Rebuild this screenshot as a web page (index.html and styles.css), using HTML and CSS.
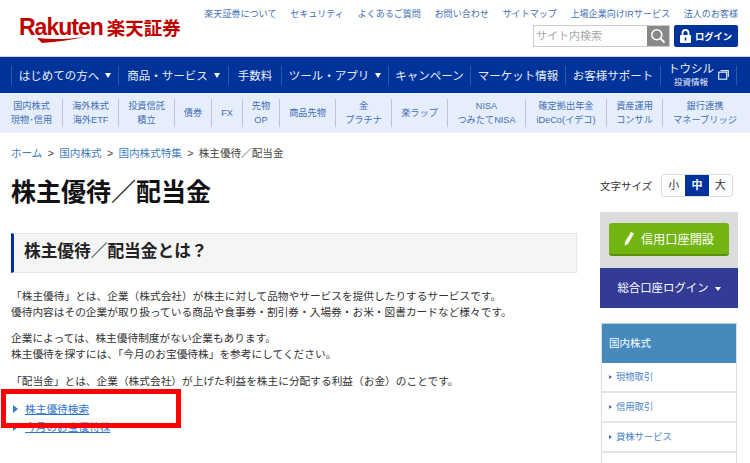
FILE: index.html
```
<!DOCTYPE html>
<html lang="ja">
<head>
<meta charset="utf-8">
<title>株主優待／配当金</title>
<link rel="stylesheet" href="styles.css">
</head>
<body>
<header class="head">
  <div class="logo">
    <span class="logo-r">Rakuten<svg class="swoosh" viewBox="0 0 48 6" aria-hidden="true"><path d="M0 1 C16 3 34 2 48 0 C34 3 20 5 5 6 Z" fill="#bf0000"/></svg></span><span class="logo-j">楽天証券</span>
  </div>
  <div class="head-right">
    <nav class="util">
      <a>楽天証券について</a><a>セキュリティ</a><a>よくあるご質問</a><a>お問い合わせ</a><a>サイトマップ</a><a>上場企業向けIRサービス</a><a>法人のお客様</a>
    </nav>
    <div class="tools">
      <div class="search"><span class="search-text">サイト内検索</span><span class="search-btn"><svg width="16" height="16" viewBox="0 0 16 16" aria-hidden="true"><circle cx="6.8" cy="6.8" r="5" fill="none" stroke="#fff" stroke-width="1.5"/><path d="M10.5 10.5 L14.5 14.5" stroke="#fff" stroke-width="1.8"/></svg></span></div>
      <div class="login"><svg width="11" height="14" viewBox="0 0 11 14" aria-hidden="true"><path d="M2.5 6 V4 a3 3 0 0 1 6 0 V6" fill="none" stroke="#fff" stroke-width="1.8"/><rect x="0" y="6" width="11" height="8" rx="1" fill="#fff"/><rect x="4.7" y="8.5" width="1.6" height="3" fill="#039"/></svg><span>ログイン</span></div>
    </div>
  </div>
</header>
<nav class="gnav">
  <a class="g1">はじめての方へ<i class="tri"></i></a>
  <a class="g2">商品・サービス<i class="tri"></i></a>
  <a class="g3">手数料</a>
  <a class="g4">ツール・アプリ<i class="tri"></i></a>
  <a class="g5">キャンペーン</a>
  <a class="g6">マーケット情報</a>
  <a class="g7">お客様サポート</a>
  <a class="g8"><span class="tousiru"><span>トウシル</span><small>投資情報</small></span><svg width="11" height="10" viewBox="0 0 11 10" aria-hidden="true"><rect x="0.7" y="2.2" width="8" height="7" fill="none" stroke="#dfe6f5" stroke-width="1.2"/><path d="M2.5 0.7 H10.3 V7" fill="none" stroke="#dfe6f5" stroke-width="1.2"/></svg></a>
</nav>
<nav class="snav">
  <a class="s1">国内株式<br>現物･信用</a>
  <a class="s2">海外株式<br>海外ETF</a>
  <a class="s3">投資信託<br>積立</a>
  <a class="s4">債券</a>
  <a class="s5">FX</a>
  <a class="s6">先物<br>OP</a>
  <a class="s7">商品先物</a>
  <a class="s8">金<br>プラチナ</a>
  <a class="s9">楽ラップ</a>
  <a class="s10">NISA<br>つみたてNISA</a>
  <a class="s11">確定拠出年金<br>iDeCo(イデコ)</a>
  <a class="s12">資産運用<br>コンサル</a>
  <a class="s13">銀行連携<br>マネーブリッジ</a>
</nav>
<div class="page">
  <main class="main">
    <p class="crumb"><a>ホーム</a><span>&gt;</span><a>国内株式</a><span>&gt;</span><a>国内株式特集</a><span>&gt;</span><span>株主優待／配当金</span></p>
    <h1>株主優待／配当金</h1>
    <h2>株主優待／配当金とは？</h2>
    <p class="para">「株主優待」とは、企業（株式会社）が株主に対して品物やサービスを提供したりするサービスです。<br>優待内容はその企業が取り扱っている商品や食事券・割引券・入場券・お米・図書カードなど様々です。</p>
    <p class="para">企業によっては、株主優待制度がない企業もあります。<br>株主優待を探すには、「今月のお宝優待株」を参考にしてください。</p>
    <p class="para para-last">「配当金」とは、企業（株式会社）が上げた利益を株主に分配する利益（お金）のことです。</p>
    <ul class="links">
      <li><a>株主優待検索</a></li>
      <li><a>今月のお宝優待株</a></li>
    </ul>
    <div class="highlight"></div>
  </main>
  <aside class="side">
    <div class="fontsize"><span class="fs-label">文字サイズ</span><div class="fs-box"><span>小</span><span class="on">中</span><span>大</span></div></div>
    <div class="open-wrap"><a class="open"><svg width="11" height="15" viewBox="0 0 11 15" aria-hidden="true"><path d="M7 1 L10 2.6 L4 13 L0.8 14.6 L1 11 Z" fill="#fff"/></svg>信用口座開設</a></div>
    <div class="acct">総合口座ログイン<i class="tri tri-s"></i></div>
    <div class="menu">
      <div class="menu-h">国内株式</div>
      <a>現物取引</a>
      <a>信用取引</a>
      <a>貸株サービス</a>
      <a></a>
    </div>
  </aside>
</div>
</body>
</html>
```
FILE: styles.css
```
html, body { margin: 0; padding: 0; }
body {
  width: 750px;
  height: 463px;
  overflow: hidden;
  background: #fff;
  color: #333;
  font-family: "Liberation Sans", "Noto Sans CJK JP", sans-serif;
  font-size: 12px;
}
a { color: inherit; text-decoration: none; }
.head {
  display: flex;
  justify-content: space-between;
  height: 56px;
  box-sizing: border-box;
}
.logo {
  display: flex;
  align-items: baseline;
  padding: 13px 0 0 19px;
  color: #bf0000;
  white-space: nowrap;
  flex: none;
}
.logo-r {
  position: relative;
  font-size: 23px;
  line-height: 28px;
  font-weight: 700;
  letter-spacing: -1px;
  font-family: "Liberation Sans", sans-serif;
}
.swoosh {
  position: absolute;
  left: 18px;
  top: 24px;
  width: 48px;
  height: 6px;
}
.logo-j {
  margin-left: 4px;
  font-size: 18.5px;
  font-weight: 700;
}
.head-right {
  display: flex;
  flex-direction: column;
  align-items: flex-end;
  padding-right: 12px;
}
.util {
  display: flex;
  gap: 13.7px;
  padding-top: 8px;
  height: 17px;
  font-size: 9.05px;
  line-height: 13px;
  color: #3f6fb5;
  white-space: nowrap;
}
.tools { display: flex; gap: 4px; }
.search {
  display: flex;
  width: 137px;
  height: 22px;
  box-sizing: border-box;
  border: 1px solid #ccc;
  background: #fff;
}
.search-text {
  flex: 1;
  padding-left: 2px;
  font-size: 11px;
  line-height: 20px;
  color: #aaa;
}
.search-btn {
  display: flex;
  align-items: center;
  justify-content: center;
  width: 22px;
  background: #888;
}
.login {
  display: flex;
  align-items: center;
  justify-content: center;
  gap: 4px;
  width: 64px;
  height: 22px;
  box-sizing: border-box;
  border-radius: 2px;
  background: #039;
  color: #fff;
  font-size: 9.3px;
  font-weight: 700;
}
.gnav {
  display: flex;
  align-items: center;
  height: 37px;
  box-sizing: border-box;
  border-top: 1px solid #c9d4ea;
  padding-left: 11px;
  background: #039;
  color: #e8eefa;
  font-size: 11.5px;
  white-space: nowrap;
}
.gnav a {
  display: flex;
  align-items: center;
  justify-content: center;
  flex: none;
  height: 19px;
  box-sizing: border-box;
  border-left: 1px solid #2f58a8;
}
.g1 { width: 107px; }
.g2 { width: 110px; }
.g3 { width: 53px; }
.g4 { width: 107px; }
.g5 { width: 82px; }
.g6 { width: 95px; }
.g7 { width: 95px; }
.g8 { width: 77px; gap: 4px; border-right: 1px solid #2f58a8; }
.tri {
  display: inline-block;
  width: 0;
  height: 0;
  margin-left: 6px;
  border-style: solid;
  border-width: 5px 3.5px 0;
  border-color: #fff transparent transparent;
}
.tousiru {
  display: flex;
  flex-direction: column;
  align-items: center;
  line-height: 14px;
}
.tousiru small { font-size: 8.5px; line-height: 12px; }
.snav {
  display: flex;
  align-items: center;
  height: 40px;
  background: #e6eefb;
  padding-left: 1px;
  color: #3f6fb5;
  font-size: 9.2px;
  line-height: 14px;
  text-align: center;
  white-space: nowrap;
  border-bottom: 1px solid #eef2fa;
  box-sizing: border-box;
}
.snav a {
  display: flex;
  align-items: center;
  justify-content: center;
  flex: none;
  height: 28px;
  box-sizing: border-box;
  border-right: 1px solid #bfc5cf;
}
.snav a:last-child { border-right: 0; }
.s1 { width: 62px; } .s2 { width: 56px; } .s3 { width: 56px; } .s4 { width: 37px; }
.s5 { width: 31px; } .s6 { width: 37px; } .s7 { width: 56px; } .s8 { width: 56px; }
.s9 { width: 56px; } .s10 { width: 78px; } .s11 { width: 81px; } .s12 { width: 56px; }
.s13 { width: 84px; }
.page {
  display: flex;
  padding: 0 0 0 11px;
}
.main {
  position: relative;
  width: 566px;
  flex: none;
}
.crumb {
  display: flex;
  gap: 5.3px;
  margin: 13px 0 0;
  font-size: 10.6px;
  line-height: 15px;
  color: #444;
}
.crumb a { color: #3f7cc0; }
h1 {
  margin: 14px 0 0;
  font-size: 25px;
  line-height: 34px;
  font-weight: 700;
  color: #111;
}
h2 {
  margin: 24px 0 0;
  height: 40px;
  box-sizing: border-box;
  padding-left: 10px;
  border-left: 3px solid #039;
  border-top: 1px solid #e6e6e6;
  border-bottom: 1px solid #e6e6e6;
  border-right: 1px solid #e6e6e6;
  background: #f5f5f5;
  font-size: 16.7px;
  line-height: 36px;
  font-weight: 700;
  color: #222;
}
.para {
  margin: 10px 0 0;
  font-size: 10.7px;
  line-height: 16px;
  color: #333;
}
h2 + .para { margin-top: 15px; }
.para-last { margin-top: 11px; }
.links {
  list-style: none;
  margin: 11px 0 0;
  padding: 0;
  font-size: 10.7px;
  line-height: 18px;
}
.links li { position: relative; padding-left: 14px; }
.links li::before {
  content: "";
  position: absolute;
  left: 2px;
  top: 5px;
  border-style: solid;
  border-width: 4px 0 4px 5px;
  border-color: transparent transparent transparent #2f7fe0;
}
.links a { color: #2f74c8; text-decoration: underline; }
.highlight {
  position: absolute;
  left: -10px;
  top: 256px;
  width: 180px;
  height: 39px;
  box-sizing: border-box;
  border: 5px solid #f00;
}
.side {
  margin-left: 23px;
  width: 138px;
  flex: none;
}
.fontsize {
  display: flex;
  align-items: center;
  height: 23px;
  margin-top: 41px;
  font-size: 10.5px;
  color: #333;
}
.fs-label { width: 61px; }
.fs-box {
  display: flex;
  width: 72px;
  height: 23px;
  box-sizing: border-box;
  border: 1px solid #ddd;
  border-radius: 3px;
  font-size: 11px;
  overflow: hidden;
}
.fs-box span {
  flex: 1;
  text-align: center;
  line-height: 21px;
}
.fs-box .on {
  background: #039;
  color: #fff;
  font-weight: 700;
}
.open-wrap {
  margin-top: 15px;
  height: 56px;
  box-sizing: border-box;
  padding: 11px 9px 0;
  background: #dcdcdc;
}
.open {
  display: flex;
  align-items: center;
  justify-content: center;
  gap: 6px;
  height: 33px;
  box-sizing: border-box;
  border-bottom: 2px solid #5a8f0d;
  border-radius: 3px;
  background: #72b510;
  color: #fff;
  font-size: 12.2px;
}
.acct {
  height: 40px;
  background: #333b96;
  color: #fff;
  font-size: 11.4px;
  line-height: 40px;
  text-align: center;
}
.tri-s { border-width: 4px 3px 0; vertical-align: 1px; margin-left: 6px; }
.menu {
  margin: 15px 1px 0;
  border: 1px solid #ddd;
  border-top: 1px solid #bcd;
}
.menu-h {
  height: 39px;
  padding-left: 7px;
  background: #4589bd;
  color: #fff;
  font-size: 10.5px;
  line-height: 39px;
}
.menu a {
  display: block;
  position: relative;
  height: 30px;
  box-sizing: border-box;
  padding-left: 14px;
  border-bottom: 2px solid #e4e4e4;
  color: #4a84c6;
  font-size: 9.3px;
  line-height: 28px;
}
.menu a::before {
  content: "";
  position: absolute;
  left: 7px;
  top: 12px;
  border-style: solid;
  border-width: 2.5px 0 2.5px 3px;
  border-color: transparent transparent transparent #3f6fb5;
}
```
